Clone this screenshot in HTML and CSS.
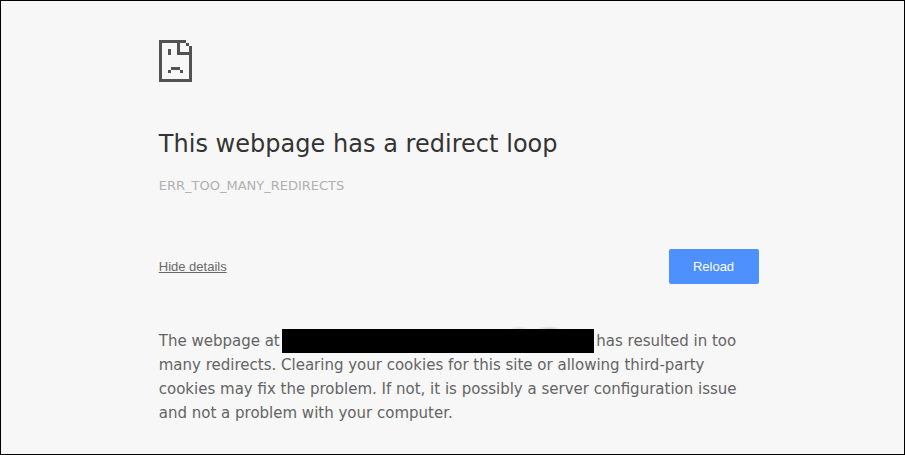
FILE: index.html
```html
<!DOCTYPE html>
<html lang="en">
<head>
  <meta charset="UTF-8" />
  <title>This webpage has a redirect loop</title>
  <link rel="stylesheet" href="styles.css">
</head>
<body>
  <div class="frame">
    <div class="container">
      <svg class="sad-tab" width="33" height="42" viewBox="0 0 11 14" shape-rendering="crispEdges">
        <path fill="#525252" d="M0 0h9v1H1v12h9V2h1v12H0z M9 1h1v1H9z M6 1h1v3h4v1H6z M3 3h1v2H3z M4 9h3v1H4z M3 10h1v1H3z M7 10h1v1H7z" />
      </svg>
      <h1>This webpage has a redirect loop</h1>
      <div class="error-code">ERR_TOO_MANY_REDIRECTS</div>
      <div class="actions">
        <a class="details-link" href="#">Hide details</a>
        <button class="reload">Reload</button>
      </div>
      <p class="details">The webpage at <span class="redacted"></span> has resulted in too many redirects. Clearing your cookies for this site or allowing third-party cookies may fix the problem. If not, it is possibly a server configuration issue and not a problem with your computer.</p>
    </div>
  </div>
</body>
</html>
```

FILE: styles.css
```css
html, body {
  margin: 0;
  padding: 0;
}

body {
  width: 905px;
  height: 455px;
  overflow: hidden;
}

.frame {
  box-sizing: border-box;
  height: 455px;
  border: 1px solid #000;
  background-color: #f7f7f7;
  overflow: hidden;
}

.container {
  width: 600.25px;
  margin-left: 157.75px;
  padding-top: 39px;
  font-family: "DejaVu Sans", sans-serif;
}

.sad-tab {
  display: block;
  margin-left: 0.25px;
}

h1 {
  margin: 46px 0 0;
  font-size: 24px;
  font-weight: 400;
  line-height: 32px;
  letter-spacing: 0.03px;
  color: #333;
}

.error-code {
  margin-top: 18px;
  font-size: 13px;
  line-height: 16px;
  color: #b0b0b0;
}

.actions {
  display: flex;
  align-items: center;
  justify-content: space-between;
  margin-top: 55px;
}

.details-link {
  font-family: "Liberation Sans", sans-serif;
  font-size: 13px;
  color: #696969;
}

.reload {
  width: 90px;
  height: 35px;
  padding: 0 7px 0 6px;
  border: none;
  border-radius: 2px;
  background-color: #4d90fe;
  color: #fff;
  font-family: "Liberation Sans", sans-serif;
  font-size: 13px;
}

.details {
  margin: 45px 0 0;
  font-size: 15px;
  line-height: 24px;
  color: #646464;
}

.redacted {
  display: inline-block;
  position: relative;
  width: 312.5px;
  height: 24px;
  margin: 0 -2.5px 0 -3px;
  background-color: #000;
  vertical-align: top;
}

/* faint smudge just above the black bar */
.redacted::before {
  content: "";
  position: absolute;
  left: 225px;
  top: -4px;
  width: 60px;
  height: 4px;
  background:
    radial-gradient(ellipse 9px 3px at 12px 100%, #dcdcdc, transparent),
    radial-gradient(ellipse 13px 3px at 42px 100%, #cfcfcf, transparent);
}
```
